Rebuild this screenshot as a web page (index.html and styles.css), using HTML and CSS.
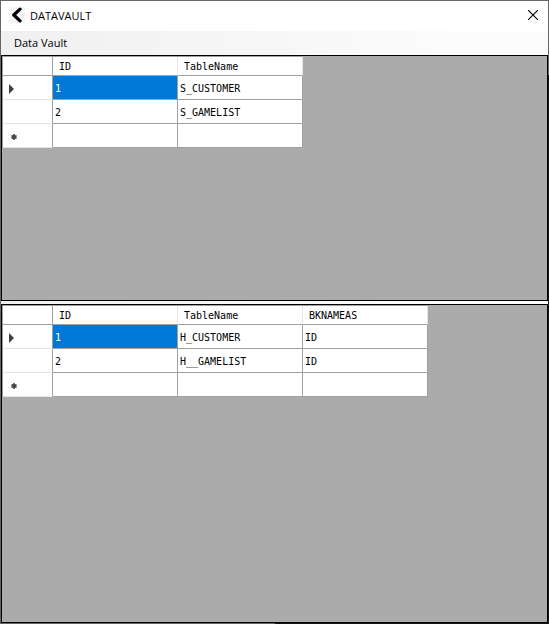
FILE: index.html
```html
<!DOCTYPE html>
<html lang="en">
<head>
<meta charset="utf-8">
<title>DATAVAULT</title>
<link rel="stylesheet" href="styles.css">
</head>
<body>
<div class="window">
  <header class="titlebar">
    <svg class="app-icon" width="16" height="16" viewBox="0 0 16 16" aria-hidden="true">
      <rect width="16" height="16" fill="#f4f4f4"/>
      <path d="M11 2.200L4.800 8l6.200 5.800" fill="none" stroke="#000" stroke-width="3.200" stroke-linecap="round" stroke-linejoin="round"/>
    </svg>
    <h1 class="title">DATAVAULT</h1>
    <button class="close" type="button" aria-label="Close">
      <svg width="10" height="10" viewBox="0 0 10 10" aria-hidden="true">
        <path d="M0 0L10 10M10 0L0 10" fill="none" stroke="#000" stroke-width="1.100"/>
      </svg>
    </button>
  </header>
  <nav class="menubar">
    <button class="menu-item" type="button">Data Vault</button>
  </nav>
  <main class="split">
    <section class="panel">
      <table class="grid">
        <thead>
          <tr><th class="stub"></th><th class="col">ID</th><th class="col">TableName</th></tr>
        </thead>
        <tbody>
          <tr><th class="stub"><svg class="current" width="5" height="10" viewBox="0 0 5 10" aria-hidden="true"><path d="M0 0L5 5L0 10z" fill="#404040"/></svg></th><td class="selected">1</td><td>S_CUSTOMER</td></tr>
          <tr><th class="stub"></th><td>2</td><td>S_GAMELIST</td></tr>
          <tr><th class="stub"><svg class="new-row" width="6" height="6" viewBox="0 0 6 6" aria-hidden="true"><rect y="1" width="6" height="4" fill="#a0a0a0"/><path d="M3 0v6" stroke="#707070" stroke-width="2"/><circle cx="3" cy="3" r="2.200" fill="#484848"/></svg></th><td></td><td></td></tr>
        </tbody>
      </table>
    </section>
    <section class="panel">
      <table class="grid">
        <thead>
          <tr><th class="stub"></th><th class="col">ID</th><th class="col">TableName</th><th class="col">BKNAMEAS</th></tr>
        </thead>
        <tbody>
          <tr><th class="stub"><svg class="current" width="5" height="10" viewBox="0 0 5 10" aria-hidden="true"><path d="M0 0L5 5L0 10z" fill="#404040"/></svg></th><td class="selected">1</td><td>H_CUSTOMER</td><td>ID</td></tr>
          <tr><th class="stub"></th><td>2</td><td>H__GAMELIST</td><td>ID</td></tr>
          <tr><th class="stub"><svg class="new-row" width="6" height="6" viewBox="0 0 6 6" aria-hidden="true"><rect y="1" width="6" height="4" fill="#a0a0a0"/><path d="M3 0v6" stroke="#707070" stroke-width="2"/><circle cx="3" cy="3" r="2.200" fill="#484848"/></svg></th><td></td><td></td><td></td></tr>
        </tbody>
      </table>
    </section>
  </main>
</div>
</body>
</html>
```
FILE: styles.css
```css
* {
  box-sizing: border-box;
}

body {
  margin: 0;
  color: #000;
  font: 11px/16px "Open Sans", "Noto Sans", sans-serif;
}

button {
  border: 0;
  padding: 0;
  background: none;
  color: inherit;
  font: inherit;
}

.window {
  display: flex;
  flex-direction: column;
  min-height: 100vh;
  padding: 1px;
  background: linear-gradient(#151515, #151515) right bottom / 50% 88% no-repeat #666;
}

.titlebar {
  display: flex;
  align-items: center;
  height: 30px;
  padding: 0 10px 2px 8px;
  background: #fff;
}

.title {
  flex: 1;
  margin: 0;
  padding: 2px 0 0 5px;
  font-size: 11px;
  font-weight: 400;
}

.close {
  display: flex;
}

.menubar {
  display: flex;
  align-items: center;
  height: 24px;
  padding: 0 13px;
  background: linear-gradient(90deg, #f0f0f0, #fcfcfc 85%);
}

.split {
  flex: 1;
  display: grid;
  grid-template-rows: 246fr 319fr;
  gap: 3px;
  background: linear-gradient(90deg, #f0f0f0, #fcfcfc 85%);
}

.panel {
  border: 1px solid #000;
  background: #ababab;
  overflow: auto;
}

.grid {
  border-collapse: separate;
  border-spacing: 0;
  border-top: 1px solid #a0a0a0;
  border-left: 1px solid #a0a0a0;
  font: 10px/14px "DejaVu Sans Mono", monospace;
}

.grid th,
.grid td {
  height: 24px;
  min-width: 125px;
  padding: 2px 2px 0;
  border-right: 1px solid #a0a0a0;
  border-bottom: 1px solid #a0a0a0;
  background: #fff;
  font-weight: 400;
  text-align: left;
  white-space: nowrap;
}

.grid thead th {
  height: 19px;
}

.grid .col {
  padding: 2px 6px 0;
  border-right-color: #e5e5e5;
}

.grid .stub {
  width: 50px;
  min-width: 50px;
  padding: 2px 6px 0;
}

.grid thead .stub {
  border-right-color: #a0a0a0;
}

.grid tbody .stub {
  border-bottom-color: #e5e5e5;
}

.grid .selected {
  background: #0078d7;
  color: #fff;
}

.stub svg {
  display: block;
}

.new-row {
  margin-left: 2px;
}
```
